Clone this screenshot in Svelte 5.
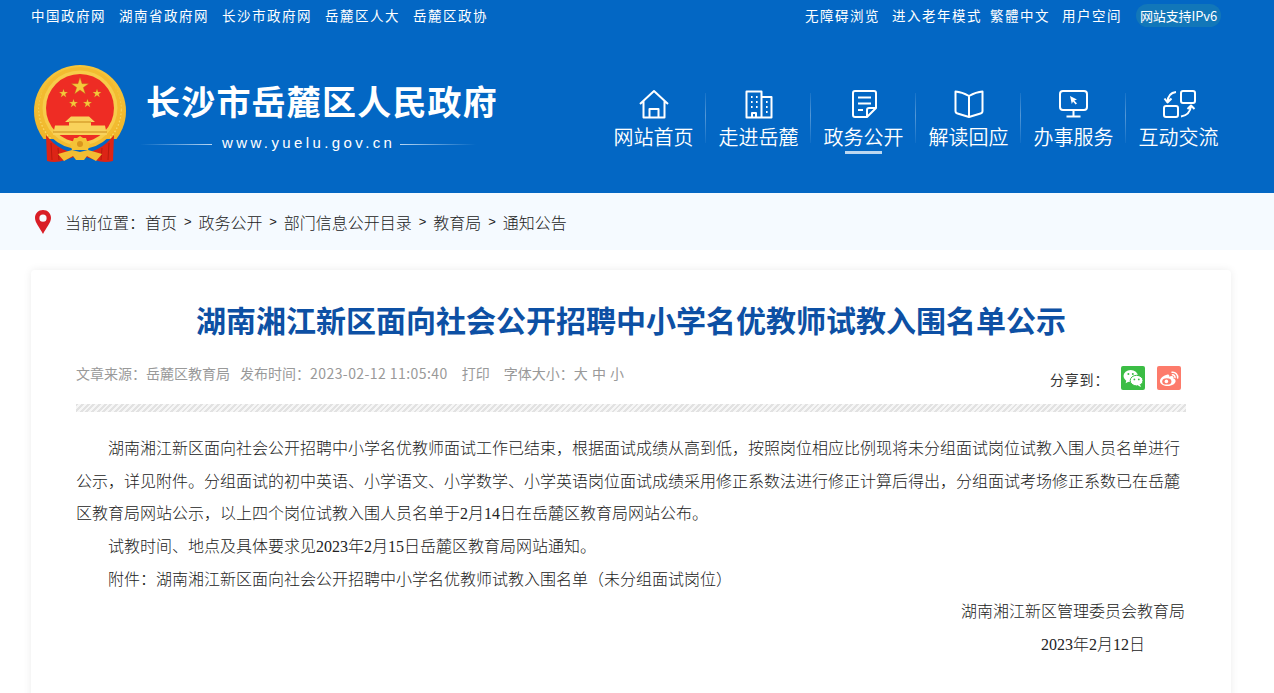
<script>
    const quickLinks = ['中国政府网', '湖南省政府网', '长沙市政府网', '岳麓区人大', '岳麓区政协'];
    const crumbs = ['首页', '政务公开', '部门信息公开目录', '教育局', '通知公告'];
    const navItems = [
        { key: 'home', label: '网站首页' },
        { key: 'city', label: '走进岳麓' },
        { key: 'doc', label: '政务公开', active: true },
        { key: 'book', label: '解读回应' },
        { key: 'screen', label: '办事服务' },
        { key: 'swap', label: '互动交流' }
    ];
    const title = '湖南湘江新区面向社会公开招聘中小学名优教师试教入围名单公示';
</script>

<header class="header">
    <div class="topbar">
        <nav class="quick">
            {#each quickLinks as link}
                <span>{link}</span>
            {/each}
        </nav>
        <div class="tools">
            <span class="tool">无障碍浏览</span>
            <span class="tool tool-old">进入老年模式</span>
            <span class="tool">繁體中文</span>
            <span class="tool tool-user">用户空间</span>
            <span class="pill">网站支持IPv6</span>
        </div>
    </div>

    <div class="masthead">
        <div class="brand">
            <svg class="emblem" viewBox="0 0 92 98" aria-hidden="true">
                <defs>
                    <linearGradient id="gold" x1="0" y1="0" x2="0" y2="1">
                        <stop offset="0" stop-color="#f5c63c" />
                        <stop offset="1" stop-color="#eeb024" />
                    </linearGradient>
                    <clipPath id="ring-clip">
                        <rect x="0" y="0" width="92" height="74" />
                    </clipPath>
                    <polygon id="star" points="0,-1 0.225,-0.309 0.951,-0.309 0.363,0.118 0.588,0.809 0,0.382 -0.588,0.809 -0.363,0.118 -0.951,-0.309 -0.225,-0.309" />
                </defs>
                <g clip-path="url(#ring-clip)">
                    <circle cx="46" cy="46" r="46" fill="url(#gold)" />
                    <circle cx="46" cy="45" r="41" fill="none" stroke="#f8d865" stroke-width="1.4" stroke-dasharray="1.6 2" />
                </g>
                <path d="M12 70 L13 96 Q22 98.5 31 95 L46 90 L61 95 Q70 98.5 79 96 L80 70 Q66 88 46 88 Q26 88 12 70 Z" fill="#dc2416" />
                <path d="M17 78 L18 95 M24 83 L25 95 M75 78 L74 95 M68 83 L67 95" stroke="#b81a0e" stroke-width="1" fill="none" />
                <circle cx="46" cy="43" r="41" fill="#f2bb30" />
                <circle cx="46" cy="43" r="37.5" fill="#f7cc4a" />
                <circle cx="46" cy="43" r="34" fill="#ee2c24" />
                <g fill="#f6c83b" stroke="#b8791a" stroke-width="0.04">
                    <use href="#star" transform="translate(46 21.5) scale(9)" />
                    <use href="#star" transform="translate(29.5 28.5) scale(4.6)" />
                    <use href="#star" transform="translate(63 28.5) scale(4.6)" />
                    <use href="#star" transform="translate(39.5 38.5) scale(4.6)" />
                    <use href="#star" transform="translate(53.5 38.5) scale(4.6)" />
                </g>
                <path d="M37 51.5 H55 L61 57 H57 V60.5 H71 L73 70 H19 L21 60.5 H35 V57 H31 Z" fill="#f9d25b" />
                <rect x="19" y="66.5" width="54" height="1" fill="#c98a1a" />
                <rect x="35" y="56.5" width="22" height="1" fill="#c98a1a" />
                <path d="M38 85 L36 78 L39 76 L40 73 L43 73 L46 71 L49 73 L52 73 L53 76 L56 78 L54 85 Z" fill="#f4c237" />
                <circle cx="46" cy="79" r="3" fill="#d9951d" />
                <path d="M24 89 L38 85 L46 87 L54 85 L68 89 L62 96 L53 91 L50 95 L42 95 L39 91 L30 96 Z" fill="#f3bd33" />
            </svg>
            <div class="brand-text">
                <div class="site-name">长沙市岳麓区人民政府</div>
                <div class="site-url">
                    <i class="rule rule-left"></i>
                    <span>www.yuelu.gov.cn</span>
                    <i class="rule rule-right"></i>
                </div>
            </div>
        </div>

        <nav class="mainnav">
            {#each navItems as item}
                <div class="nav-item" class:active={item.active}>
                    <svg class="nav-icon" viewBox="0 0 30 30" aria-hidden="true">
                        {#if item.key === 'home'}
                            <path d="M1 14 L15 1 L29 14 M4.5 11 V27.5 H25.5 V11 M10.5 27.5 V19 H19.5 V27.5" />
                        {:else if item.key === 'city'}
                            <path d="M2.5 27.5 V1.5 H17.5 V27.5 Z M17.5 7 H27.5 V27.5 H2.5 M8 27.5 V23 H12 V27.5" />
                            <path d="M7 7 h1.6 M12 7 h1.6 M7 12 h1.6 M12 12 h1.6 M7 17 h1.6 M12 17 h1.6 M22 12 h1.6 M22 17 h1.6 M22 22 h1.6" />
                        {:else if item.key === 'doc'}
                            <path d="M18 27 H6 Q4 27 4 25 V3 Q4 1 6 1 H25 Q27 1 27 3 V18 L18 27 V20 Q18 18 20 18 H27" />
                            <path d="M9 7.5 H22 M9 13.5 H22 M9 20 H14" />
                        {:else if item.key === 'book'}
                            <path d="M15 6 Q8 2 1.5 1.5 V21 Q1.5 23 3.5 23.5 L15 27 L26.5 23.5 Q28.5 23 28.5 21 V1.5 Q22 2 15 6 Z M15 6 V27" />
                        {:else if item.key === 'screen'}
                            <rect x="1" y="1" width="27" height="19" rx="3" />
                            <path d="M14.5 20 V26 M7.5 26.5 H21.5" />
                            <path class="cursor" d="M11 6 L18 9.5 L15.3 10.6 L18 13.5 L16.6 14.6 L14 11.6 L12.8 14 Z" />
                        {:else}
                            <rect x="17" y="1" width="14" height="12" rx="2" />
                            <rect x="0" y="16" width="14" height="11" rx="2" />
                            <path d="M12 2 Q4 3 3.5 12 M0.5 8.5 L3.5 12.5 L7.5 8.5" />
                            <path d="M17 26.5 Q26 25 27 16 M23.5 19 L27 15.5 L30.5 19" />
                        {/if}
                    </svg>
                    <span class="nav-label">{item.label}</span>
                </div>
            {/each}
        </nav>
    </div>
</header>

<div class="crumbs">
    <svg class="pin" viewBox="0 0 16 24" aria-hidden="true">
        <path fill-rule="evenodd" d="M8 0 C3.4 0 0 3.5 0 8 C0 12.8 5 18 8 24 C11 18 16 12.8 16 8 C16 3.5 12.6 0 8 0 Z M8 4.6 A3.6 3.6 0 1 1 8 11.8 A3.6 3.6 0 1 1 8 4.6 Z" />
    </svg>
    <span class="crumb-lead">当前位置：</span>
    {#each crumbs as crumb, i}
        {#if i > 0}<span class="crumb-sep">&gt;</span>{/if}
        <span>{crumb}</span>
    {/each}
</div>

<main class="page">
    <article class="card">
        <h1>{title}</h1>

        <div class="meta">
            <div class="meta-text">
                <span>文章来源：岳麓区教育局</span>
                <span class="m-time">发布时间：<span class="m-stamp">2023-02-12 11:05:40</span></span>
                <span class="m-print">打印</span>
                <span class="m-size">字体大小：<span class="m-sizes">大 中 小</span></span>
            </div>
            <div class="share">
                <span class="share-label">分享到：</span>
                <span class="share-btn wechat">
                    <svg viewBox="0 0 24 24" aria-hidden="true">
                        <ellipse cx="9.7" cy="10" rx="7.2" ry="6" fill="#fff" />
                        <path d="M5.5 14 L4.6 17.2 L8.4 15.2 Z" fill="#fff" />
                        <ellipse cx="15.6" cy="14.6" rx="6.4" ry="5.3" fill="#fff" stroke="#3bbd45" stroke-width="1" />
                        <path d="M19 18.5 L20 21 L16.8 19.4 Z" fill="#fff" />
                        <circle cx="7.4" cy="8" r="1" fill="#3bbd45" />
                        <circle cx="11.8" cy="8" r="1" fill="#3bbd45" />
                        <circle cx="13.4" cy="13.4" r="0.9" fill="#3bbd45" />
                        <circle cx="17.8" cy="13.4" r="0.9" fill="#3bbd45" />
                    </svg>
                </span>
                <span class="share-btn weibo">
                    <svg viewBox="0 0 24 24" aria-hidden="true">
                        <path d="M10.5 8.6 C6.6 9.4 3 12.4 3 15.2 C3 18.2 6.8 20 10.6 20 C15.2 20 18.6 17.4 18.6 15 C18.6 13.6 17.4 12.9 16.4 12.6 C16.9 11.2 16.5 10 14.8 10 C13.8 10 12.8 10.4 12.2 10.7 C12.5 9 12 8.3 10.5 8.6 Z" fill="#fff" />
                        <ellipse cx="9.8" cy="15.4" rx="4.6" ry="3.2" fill="#fd7b6b" />
                        <circle cx="9.4" cy="15.4" r="1.8" fill="#fff" />
                        <path d="M15 6.2 A5 5 0 0 1 20.6 12 M15.4 8.8 A2.5 2.5 0 0 1 18 11.6" fill="none" stroke="#fff" stroke-width="1.5" stroke-linecap="round" />
                    </svg>
                </span>
            </div>
        </div>

        <div class="divider"></div>

        <div class="content">
            <p>湖南湘江新区面向社会公开招聘中小学名优教师面试工作已结束，根据面试成绩从高到低，按照岗位相应比例现将未分组面试岗位试教入围人员名单进行公示，详见附件。分组面试的初中英语、小学语文、小学数学、小学英语岗位面试成绩采用修正系数法进行修正计算后得出，分组面试考场修正系数已在岳麓区教育局网站公示，以上四个岗位试教入围人员名单于2月14日在岳麓区教育局网站公布。</p>
            <p>试教时间、地点及具体要求见2023年2月15日岳麓区教育局网站通知。</p>
            <p>附件：湖南湘江新区面向社会公开招聘中小学名优教师试教入围名单（未分组面试岗位）</p>
            <p class="sign">湖南湘江新区管理委员会教育局</p>
            <p class="sign date">2023年2月12日</p>
        </div>
    </article>
</main>

<style>
    :global(body) {
        background: #fff;
        font-family: "Noto Sans CJK SC", "Liberation Sans", sans-serif;
        font-weight: 300;
        overflow: hidden;
    }

    .header {
        background: #0367c4;
        color: #fff;
        height: 193px;
    }

    .topbar {
        align-items: center;
        display: flex;
        font-size: 13.5px;
        font-weight: 400;
        height: 30px;
        justify-content: space-between;
        padding: 0 53px 0 31px;
    }

    .quick {
        display: flex;
        gap: 13px;
        letter-spacing: 1.5px;
    }

    .tools {
        align-items: center;
        display: flex;
        letter-spacing: 1.5px;
    }

    .tool {
        margin-right: 12px;
    }

    .tool-old {
        margin-right: 8px;
    }

    .tool-user {
        margin-right: 14px;
    }

    .pill {
        background: #1277b9;
        border-radius: 12px;
        font-size: 13px;
        height: 23px;
        letter-spacing: -0.1px;
        line-height: 23px;
        text-align: center;
        white-space: nowrap;
        width: 85px;
    }

    .masthead {
        display: flex;
        justify-content: space-between;
        padding: 35px 43px 0 34px;
    }

    .brand {
        display: flex;
    }

    .emblem {
        display: block;
        height: 98px;
        width: 92px;
    }

    .brand-text {
        margin-left: 20px;
        padding-top: 14px;
    }

    .site-name {
        font-size: 34px;
        font-weight: 700;
        letter-spacing: 1.2px;
        line-height: 44px;
        white-space: nowrap;
    }

    .site-url {
        align-items: center;
        display: flex;
        font-family: "Liberation Sans", sans-serif;
        font-size: 15px;
        font-weight: 400;
        gap: 5px;
        letter-spacing: 3.4px;
        line-height: 20px;
        margin: 10px 0 0 -6px;
    }

    .rule {
        display: block;
        height: 1px;
        margin-top: 3px;
    }

    .rule-left {
        background: linear-gradient(90deg, rgba(255, 255, 255, 0), #b8d6f2);
        margin-right: 5px;
        width: 72px;
    }

    .rule-right {
        background: linear-gradient(90deg, #b8d6f2, rgba(255, 255, 255, 0));
        width: 76px;
    }

    .mainnav {
        display: flex;
        padding-top: 25px;
    }

    .nav-item {
        align-items: center;
        display: flex;
        flex-direction: column;
        height: 64px;
        position: relative;
        width: 105px;
    }

    .nav-item:not(:last-child)::after {
        background: linear-gradient(180deg, rgba(255, 255, 255, 0.08), rgba(255, 255, 255, 0.32) 45%, rgba(255, 255, 255, 0.05));
        content: '';
        height: 50px;
        position: absolute;
        right: 0;
        top: 3px;
        width: 1px;
    }

    .nav-icon {
        display: block;
        fill: none;
        height: 30px;
        overflow: visible;
        stroke: #fff;
        stroke-linejoin: round;
        stroke-width: 2;
        width: 30px;
    }

    .nav-icon .cursor {
        fill: #fff;
        stroke: none;
    }

    .nav-label {
        font-size: 20px;
        font-weight: 350;
        line-height: 30px;
        margin-top: 2px;
    }

    .active::before {
        background: #bcd7f0;
        bottom: 0;
        content: '';
        height: 3px;
        left: 34px;
        position: absolute;
        width: 37px;
    }

    .crumbs {
        align-items: center;
        background: #f5faff;
        color: #222;
        display: flex;
        font-size: 16px;
        height: 57px;
        padding-left: 35px;
    }

    .pin {
        display: block;
        fill: #d91e27;
        height: 24px;
        margin-right: 14px;
        width: 16px;
    }

    .crumb-sep {
        font-family: "Liberation Sans", sans-serif;
        font-size: 13px;
        text-align: center;
        width: 21.4px;
    }

    .page {
        padding: 20px 43px 0 31px;
    }

    .card {
        border-radius: 4px;
        box-shadow: 0 0 8px rgba(0, 0, 0, 0.08);
        height: 500px;
        padding: 0 45px;
    }

    h1 {
        color: #0d50a4;
        font-size: 30px;
        font-weight: 700;
        line-height: 40px;
        margin: 0;
        padding-top: 29px;
        text-align: center;
    }

    .meta {
        align-items: center;
        display: flex;
        height: 24px;
        justify-content: space-between;
        margin-top: 27px;
    }

    .meta-text {
        color: #999;
        display: flex;
        font-size: 14px;
        font-weight: 400;
        margin-top: -11px;
    }

    .m-stamp {
        letter-spacing: 0.44px;
    }

    .m-time {
        margin-left: 10px;
    }

    .m-print,
    .m-size {
        margin-left: 14px;
    }

    .m-sizes {
        word-spacing: 1px;
    }

    .share {
        align-items: center;
        display: flex;
        padding-right: 5px;
    }

    .share-label {
        color: #333;
        font-size: 14px;
        font-weight: 400;
        letter-spacing: 0.8px;
        margin-right: 5px;
        padding-top: 1px;
        width: 66px;
    }

    .share-btn {
        border-radius: 2px;
        display: block;
        height: 24px;
        width: 24px;
    }

    .share-btn svg {
        display: block;
    }

    .wechat {
        background: #3bbd45;
    }

    .weibo {
        background: #fd7b6b;
        margin-left: 12px;
    }

    .divider {
        background: repeating-linear-gradient(135deg, #e2e2e2 0 2px, #f6f6f6 2px 4px);
        height: 8px;
        margin-top: 14px;
    }

    .content {
        color: #222;
        font-family: "Liberation Serif", "Noto Sans CJK SC", serif;
        font-size: 16px;
        line-height: 32.67px;
        padding-top: 21px;
    }

    p {
        margin: 0;
        text-indent: 32px;
    }

    .sign {
        padding-right: 1px;
        text-align: right;
    }

    .date {
        padding-right: 41px;
    }
</style>
